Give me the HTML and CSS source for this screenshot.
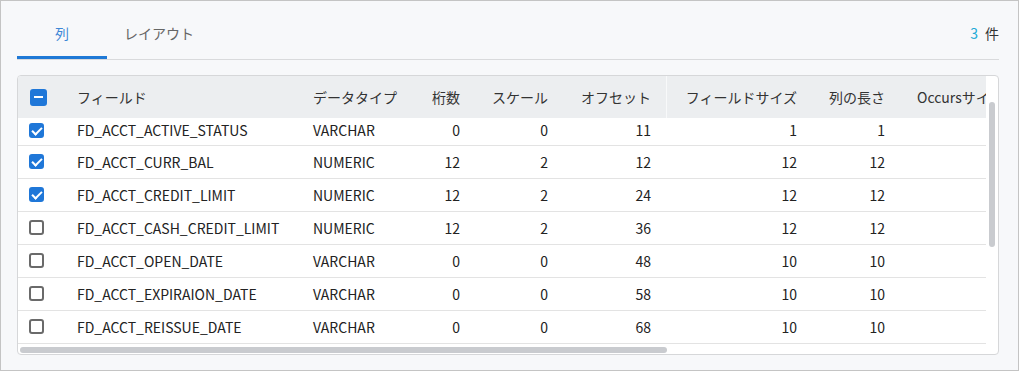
FILE: index.html
```html
<!DOCTYPE html>
<html lang="ja">
<head>
    <meta charset="UTF-8">
    <title>フィールド一覧</title>
    <link rel="stylesheet" href="styles.css">
</head>
<body>
    <div class="page">
        <div class="tabbar">
            <div class="tabs">
                <div class="tab active">列</div>
                <div class="tab">レイアウト</div>
            </div>
            <div class="count"><span class="count-num">3</span>件</div>
        </div>

        <div class="grid">
            <div class="grid-scroll">
                <table class="fields">
                    <colgroup>
                        <col class="c-check">
                        <col class="c-name">
                        <col class="c-type">
                        <col class="c-digits">
                        <col class="c-scale">
                        <col class="c-offset">
                        <col class="c-size">
                        <col class="c-len">
                        <col class="c-occurs">
                    </colgroup>
                    <thead>
                        <tr>
                            <th class="cell-check"><span class="cb cb-head cb-mixed"></span></th>
                            <th>フィールド</th>
                            <th>データタイプ</th>
                            <th class="num">桁数</th>
                            <th class="num">スケール</th>
                            <th class="num split">オフセット</th>
                            <th class="num">フィールドサイズ</th>
                            <th class="num">列の長さ</th>
                            <th>Occursサイズ</th>
                        </tr>
                    </thead>
                    <tbody>
                        <!-- 先頭行は少しスクロールして見切れている -->
                        <tr class="cut">
                            <td class="cell-check"><span class="cb on"></span></td>
                            <td>FD_ACCT_ACTIVE_STATUS</td><td>VARCHAR</td>
                            <td class="num">0</td><td class="num">0</td><td class="num">11</td>
                            <td class="num">1</td><td class="num">1</td><td></td>
                        </tr>
                        <tr>
                            <td class="cell-check"><span class="cb on"></span></td>
                            <td>FD_ACCT_CURR_BAL</td><td>NUMERIC</td>
                            <td class="num">12</td><td class="num">2</td><td class="num">12</td>
                            <td class="num">12</td><td class="num">12</td><td></td>
                        </tr>
                        <tr>
                            <td class="cell-check"><span class="cb on"></span></td>
                            <td>FD_ACCT_CREDIT_LIMIT</td><td>NUMERIC</td>
                            <td class="num">12</td><td class="num">2</td><td class="num">24</td>
                            <td class="num">12</td><td class="num">12</td><td></td>
                        </tr>
                        <tr>
                            <td class="cell-check"><span class="cb"></span></td>
                            <td>FD_ACCT_CASH_CREDIT_LIMIT</td><td>NUMERIC</td>
                            <td class="num">12</td><td class="num">2</td><td class="num">36</td>
                            <td class="num">12</td><td class="num">12</td><td></td>
                        </tr>
                        <tr>
                            <td class="cell-check"><span class="cb"></span></td>
                            <td>FD_ACCT_OPEN_DATE</td><td>VARCHAR</td>
                            <td class="num">0</td><td class="num">0</td><td class="num">48</td>
                            <td class="num">10</td><td class="num">10</td><td></td>
                        </tr>
                        <tr>
                            <td class="cell-check"><span class="cb"></span></td>
                            <td>FD_ACCT_EXPIRAION_DATE</td><td>VARCHAR</td>
                            <td class="num">0</td><td class="num">0</td><td class="num">58</td>
                            <td class="num">10</td><td class="num">10</td><td></td>
                        </tr>
                        <tr>
                            <td class="cell-check"><span class="cb"></span></td>
                            <td>FD_ACCT_REISSUE_DATE</td><td>VARCHAR</td>
                            <td class="num">0</td><td class="num">0</td><td class="num">68</td>
                            <td class="num">10</td><td class="num">10</td><td></td>
                        </tr>
                    </tbody>
                </table>
            </div>
            <div class="bar bar-v"></div>
            <div class="bar bar-h"></div>
        </div>
    </div>
</body>
</html>
```

FILE: styles.css
```css
* {
    margin: 0;
    padding: 0;
    box-sizing: border-box;
}

body {
    font-family: "Noto Sans CJK JP", "Noto Sans", sans-serif;
    font-size: 14px;
    color: #222;
}

.page {
    width: 1019px;
    height: 371px;
    background: #f7f8fa;
    border: 1px solid #c4c4c4;
    padding: 0 19px 0 16px;
}

/* タブ */
.tabbar {
    display: flex;
    justify-content: space-between;
    align-items: flex-start;
    border-bottom: 1px solid #d9dadc;
}

.tabs {
    display: flex;
}

.tab {
    min-width: 90px;
    padding: 20px 17px 11px;
    line-height: 24px;
    text-align: center;
    color: #666;
    border-bottom: 3px solid transparent;
}

.tab.active {
    color: #3d87d6;
    border-bottom-color: #1f79d6;
}

.count {
    padding-top: 20px;
    line-height: 24px;
    color: #333;
}

.count-num {
    color: #22aad6;
    margin-right: 7px;
}

/* 一覧 */
.grid {
    position: relative;
    margin-top: 15px;
    height: 280px;
    background: #fff;
    border: 1px solid #d6d7d9;
    border-radius: 4px;
    overflow: hidden;
}

.grid-scroll {
    width: calc(100% - 12px);
    height: calc(100% - 10px);
    overflow: hidden;
}

/* スクロールバー（つまみ） */
.bar {
    position: absolute;
    background: #c9cbcf;
    border-radius: 3px;
}

.bar-v {
    left: 971px;
    top: 26px;
    width: 6px;
    height: 145px;
}

.bar-h {
    left: 2px;
    top: 271px;
    width: 647px;
    height: 6px;
}

.fields {
    width: 1015px;
    table-layout: fixed;
    border-collapse: collapse;
}

.c-check { width: 43px; }
.c-name { width: 236px; }
.c-type { width: 118px; }
.c-digits { width: 61px; }
.c-scale { width: 88px; }
.c-offset { width: 103px; }
.c-size { width: 146px; }
.c-len { width: 88px; }
.c-occurs { width: 132px; }

.fields th {
    height: 42px;
    padding: 0 16px;
    background: #eceef0;
    font-weight: normal;
    color: #333;
    text-align: left;
    white-space: nowrap;
}

.fields th.split {
    box-shadow: inset -1px 0 0 #f8f9fa;
}

.fields td {
    height: 33px;
    padding: 0 16px;
    border-bottom: 1px solid #e3e3e3;
    white-space: nowrap;
}

.fields tr.cut td {
    height: 27px;
    padding-bottom: 2px;
}

.fields .num {
    text-align: right;
}

.fields .cell-check {
    padding: 0 0 0 11px;
}

.fields tr.cut .cell-check {
    padding-bottom: 2px;
}

/* チェックボックス */
.cb {
    display: block;
    width: 15px;
    height: 15px;
    border: 2px solid #6a6a6a;
    border-radius: 3px;
    background: #fff;
    position: relative;
}

.cb.on {
    border-color: #1f77d8;
    background: #1f77d8;
}

.cb.on::after {
    content: "";
    position: absolute;
    left: 3px;
    top: 0px;
    width: 4px;
    height: 8px;
    border: solid #fff;
    border-width: 0 2px 2px 0;
    transform: rotate(45deg);
}

.cb-head {
    width: 17px;
    height: 17px;
    margin-left: 1px;
}

.cb-mixed {
    border-color: #1f77d8;
    background: #1f77d8;
}

.cb-mixed::after {
    content: "";
    position: absolute;
    left: 2px;
    right: 2px;
    top: 5.5px;
    height: 2px;
    background: #fff;
}
```
